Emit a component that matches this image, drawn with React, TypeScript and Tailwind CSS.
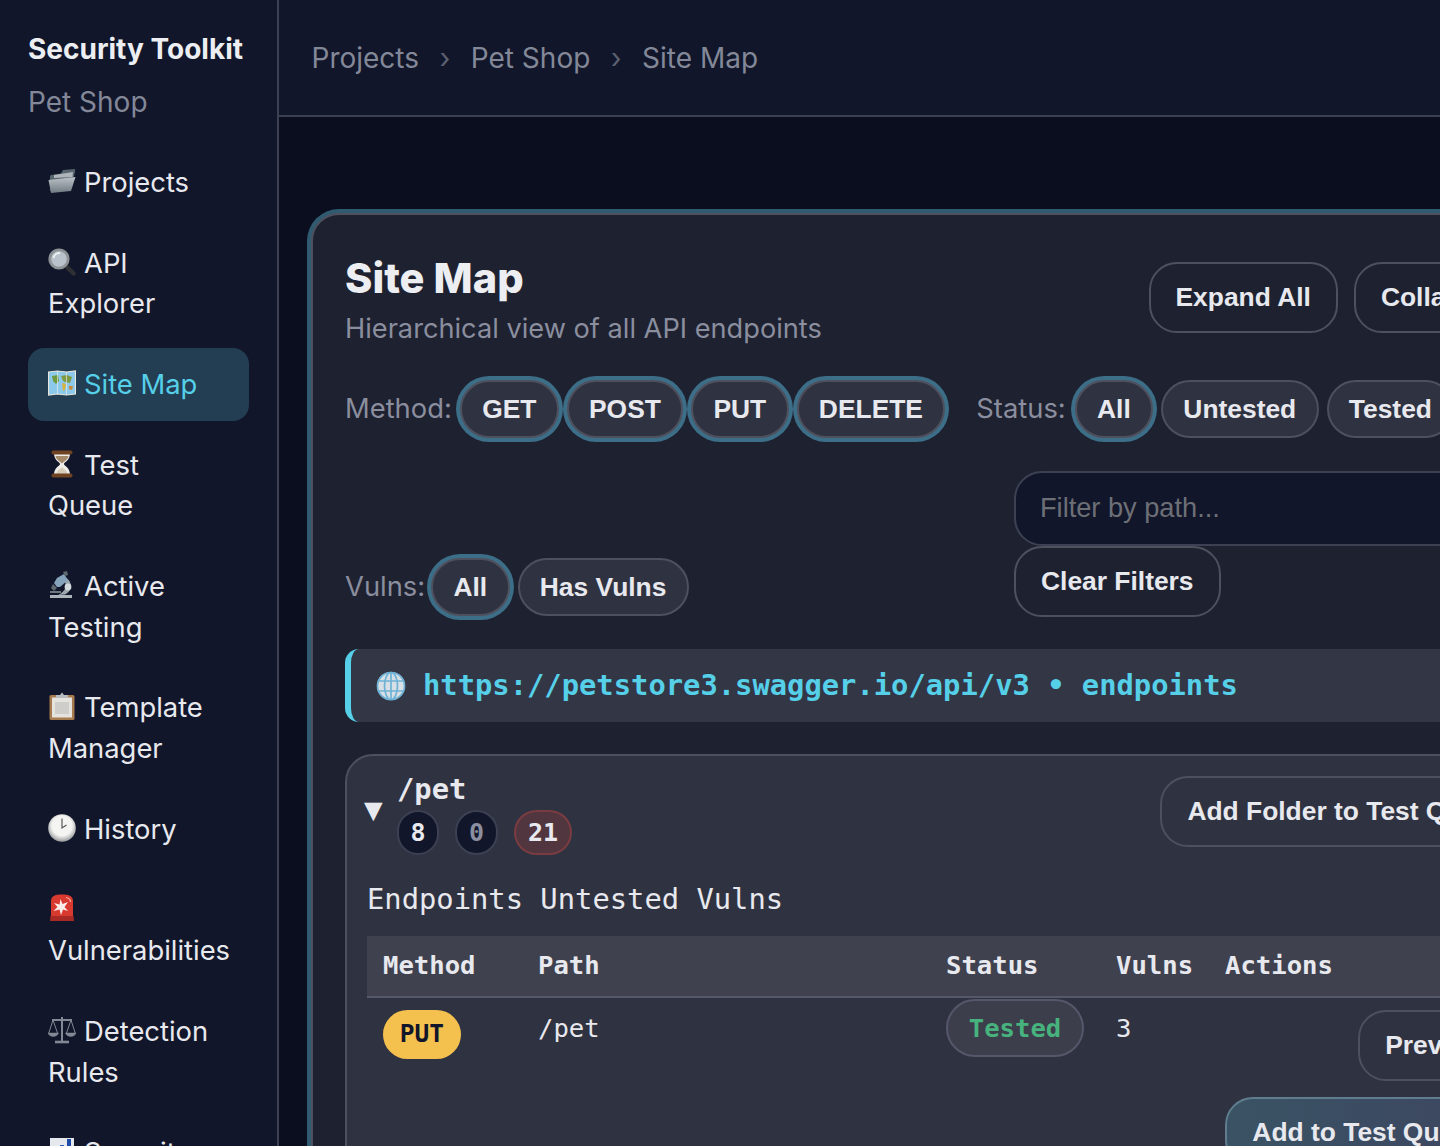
import React from "react";

const Folder = () => (
  <svg viewBox="0 0 28 28" className="inline-block w-[28px] h-[28px] align-[-3px] mr-[8px]">
    <defs>
      <linearGradient id="fo" x1="0" y1="0" x2="0" y2="1"><stop offset="0" stopColor="#bcc2c7" /><stop offset="1" stopColor="#6f7a82" /></linearGradient>
    </defs>
    <path d="M2 9 L2 24 L22 24 L27 5 L27 2 L15 3 L13 6.5 L3 8 Z" fill="#56646e" />
    <path d="M6 8 L25 5 L24.5 10 L6 11 Z" fill="#aeb4b9" />
    <path d="M0.5 13 L27.5 10 L23 24 L3 26 Z" fill="url(#fo)" />
  </svg>
);
const Magnifier = () => (
  <svg viewBox="0 0 28 28" className="inline-block w-[28px] h-[28px] align-[-3px] mr-[8px]">
    <path d="M17 17 L25.5 25.5" stroke="#2e3033" strokeWidth="4.5" strokeLinecap="round" />
    <circle cx="11" cy="11" r="9.2" fill="#b9c2ca" stroke="#8d9296" strokeWidth="2.8" />
    <path d="M5.5 10 A6 6 0 0 1 12 5" stroke="#eef1f3" strokeWidth="2" fill="none" />
  </svg>
);
const MapIcon = () => (
  <svg viewBox="0 0 28 28" className="inline-block w-[28px] h-[28px] align-[-3px] mr-[8px]">
    <path d="M0.5 3 L9.5 2 L18.5 3 L27.5 2 L27.5 25 L18.5 26 L9.5 25 L0.5 26 Z" fill="#8cc9ea" stroke="#e8e6dc" strokeWidth="1.2" />
    <path d="M4 7 L10 6 L11 12 L8 15 L5 12 Z" fill="#6d9a3e" />
    <path d="M13 7 L19 6 L24 8 L22 14 L17 13 L15 12 Z" fill="#7f9a44" />
    <path d="M14 14 L18 15 L17 21 L15 22 Z" fill="#d6b23f" />
    <path d="M21 17 L25 17 L24 21 L21 20 Z" fill="#c98a3a" />
    <path d="M9.5 2 V25 M18.5 3 V26" stroke="#f0efe6" strokeWidth="0.8" opacity="0.8" />
  </svg>
);
const Hourglass = () => (
  <svg viewBox="0 0 28 28" className="inline-block w-[28px] h-[28px] align-[-3px] mr-[8px]">
    <path d="M6 3 C6 11 12 12 12 14 C12 16 6 17 6 25 H22 C22 17 16 16 16 14 C16 12 22 11 22 3 Z" fill="#efeee8" />
    <path d="M7.5 6 H20.5 C20 10 15 12 14 13.5 C13 12 8 10 7.5 6 Z" fill="#a58a6a" />
    <path d="M8.5 24 C9 19.5 13 19 14 17 C15 19 19 19.5 19.5 24 Z" fill="#d8cdbb" />
    <rect x="3.5" y="0.5" width="21" height="4" rx="1.8" fill="#6e4322" />
    <rect x="3.5" y="23.5" width="21" height="4" rx="1.8" fill="#6e4322" />
  </svg>
);
const Microscope = () => (
  <svg viewBox="0 0 28 28" className="inline-block w-[28px] h-[28px] align-[-3px] mr-[8px]">
    <path d="M2 24 H24 V27 H2 Z" fill="#a9b4bb" />
    <path d="M16 6 C25 9 25 20 17 23.5 L10 24 C17 21 21 14 15 9 Z" fill="#9aa7ae" />
    <circle cx="20" cy="16" r="3.4" fill="#d4dbdf" />
    <path d="M9 7 L16 3 L20 9 L12 16 L9 16 L6 12 Z" fill="#85a4bc" />
    <path d="M15 1 L19 0 L20 4 L17 5 Z" fill="#5e6a70" />
    <path d="M5 13 L9 17 L6 20 L3 17 Z" fill="#5f6a70" />
    <path d="M2 20 H13 V22 H2 Z" fill="#6d787e" />
  </svg>
);
const Clipboard = () => (
  <svg viewBox="0 0 28 28" className="inline-block w-[28px] h-[28px] align-[-3px] mr-[8px]">
    <rect x="1.5" y="3" width="25" height="25" rx="1.6" fill="#a77b4e" />
    <rect x="4" y="5.5" width="20" height="20" fill="#e5e3de" />
    <rect x="7" y="10" width="14" height="12" fill="#cfcdc9" />
    <path d="M8 6 V3 H12 L14 0.5 L16 3 H20 V6 Z" fill="#b8bcc0" />
  </svg>
);
const Clock = () => (
  <svg viewBox="0 0 28 28" className="inline-block w-[28px] h-[28px] align-[-3px] mr-[8px]">
    <defs>
      <radialGradient id="cl" cx="0.5" cy="0.42" r="0.6"><stop offset="0.6" stopColor="#f4f4f2" /><stop offset="1" stopColor="#8e9092" /></radialGradient>
    </defs>
    <circle cx="14" cy="14" r="13.8" fill="url(#cl)" />
    <path d="M14 4.5 V14 L18.5 11" stroke="#55585c" strokeWidth="1.2" fill="none" />
  </svg>
);
const Siren = () => (
  <svg viewBox="0 0 28 28" className="inline-block w-[28px] h-[28px] align-[-3px] mr-[8px]">
    <path d="M3 23 V7 C3 1.5 8 0.5 14 0.5 C20 0.5 25 1.5 25 7 V23 Z" fill="#d93a2f" />
    <path d="M12.5 5 L14.5 10 L20 8 L16.5 13 L20 17 L15 15.5 L13 21 L11.5 15.5 L5.5 17 L9.5 13 L6 9 L11.5 10.5 Z" fill="#fbeeea" />
    <path d="M18 3.5 C21 4 22.5 6 22.5 8" stroke="#f7b0a6" strokeWidth="1.2" fill="none" />
    <path d="M2.5 22 H25.5 L26 27 H2 Z" fill="#a92a25" />
  </svg>
);
const Scale = () => (
  <svg viewBox="0 0 28 28" className="inline-block w-[28px] h-[28px] align-[-3px] mr-[8px]" fill="none" stroke="#838894">
    <path d="M14 1 V25 M4 4 H24" strokeWidth="2" />
    <path d="M7 26 H21" strokeWidth="2.6" />
    <path d="M5 4 L0.8 17 M5 4 L9.5 17 M23 4 L18.5 17 M23 4 L27.2 17" strokeWidth="1" />
    <path d="M0 17 H10.5 C9.5 21.5 1 21.5 0 17 Z M17.5 17 H28 C27 21.5 18.5 21.5 17.5 17 Z" fill="#838894" strokeWidth="0.5" />
  </svg>
);
const Chart = () => (
  <svg viewBox="0 0 28 28" className="inline-block w-[28px] h-[28px] align-[-3px] mr-[8px]">
    <rect x="2" y="1" width="24" height="26" fill="#e5e8ec" />
    <rect x="6" y="14" width="4" height="13" fill="#3f7ed0" />
    <rect x="12" y="8" width="4" height="19" fill="#2f5fb6" />
    <rect x="19" y="2" width="4" height="25" fill="#1d4aa8" />
  </svg>
);
const Globe = () => (
  <svg viewBox="0 0 30 30" className="w-[30px] h-[30px] shrink-0">
    <circle cx="15" cy="15" r="14" fill="#d7e0e4" />
    <g fill="none" stroke="#6fb2d6" strokeWidth="1.7">
      <circle cx="15" cy="15" r="13.5" />
      <ellipse cx="15" cy="15" rx="6.5" ry="13.5" />
      <path d="M15 1.5 V28.5 M2 10 H28 M2 20 H28" />
    </g>
  </svg>
);

type NavItem = { icon: React.ReactNode; first: string; second?: string; active?: boolean };
const nav: NavItem[] = [
  { icon: <Folder />, first: "Projects" },
  { icon: <Magnifier />, first: "API", second: "Explorer" },
  { icon: <MapIcon />, first: "Site Map", active: true },
  { icon: <Hourglass />, first: "Test", second: "Queue" },
  { icon: <Microscope />, first: "Active", second: "Testing" },
  { icon: <Clipboard />, first: "Template", second: "Manager" },
  { icon: <Clock />, first: "History" },
  { icon: <Siren />, first: "", second: "Vulnerabilities" },
  { icon: <Scale />, first: "Detection", second: "Rules" },
  { icon: <Chart />, first: "Security", second: "Reports" },
];

const Pill = ({ label, ring }: { label: string; ring?: boolean }) => (
  <button
    className={`h-[58px] px-[20.3px] rounded-full border-2 border-[#4e505e] bg-[#2f3240] text-[#e8e9ee] text-[26.4px] font-bold leading-none font-['Liberation_Sans',sans-serif] ${
      ring ? "shadow-[0_0_0_4px_#3d6e88]" : ""
    }`}
  >
    {label}
  </button>
);

const GhostButton = ({ label, className = "" }: { label: string; className?: string }) => (
  <button
    className={`h-[71px] px-[25px] rounded-[28px] border-2 border-[#4e505e] text-[#e8e9ee] text-[26.4px] font-bold leading-none whitespace-nowrap shrink-0 font-['Liberation_Sans',sans-serif] ${className}`}
  >
    {label}
  </button>
);

const Count = ({ label, className }: { label: string; className: string }) => (
  <span className={`h-[45px] rounded-full border-2 flex items-center justify-center text-[25px] font-bold ${className}`}>{label}</span>
);

export default function App() {
  return (
    <div className="flex w-[1440px] h-[1146px] overflow-hidden bg-[#0b0e1f] font-['Inter',sans-serif] text-[#e8e9ee]">
      <aside className="w-[279px] shrink-0 h-[1146px] overflow-hidden bg-[#11162a] border-r-2 border-[#3d4052] px-[28px]">
        <div className="pt-[28.5px]">
          <div className="text-[28px] leading-[40px] font-bold text-[#eceef2]">Security Toolkit</div>
          <div className="mt-[13.5px] text-[28px] leading-[40px] text-[#838898]">Pet Shop</div>
        </div>
        <nav className="mt-[24px] flex flex-col gap-[7.8px] w-[221px]">
          {nav.map((n, i) => (
            <div
              key={i}
              className={`px-[20px] pt-[16px] pb-[16px] rounded-[16px] text-[27.36px] leading-[40.8px] ${
                n.active ? "bg-[#233d52] text-[#56cfe8]" : "text-[#e8e9ee]"
              }`}
            >
              {n.icon}
              {n.first}
              {n.second && (
                <>
                  <br />
                  {n.second}
                </>
              )}
            </div>
          ))}
        </nav>
      </aside>

      <div className="flex-1 min-w-0 flex flex-col">
        <header className="h-[117px] shrink-0 bg-[#11162a] border-b-2 border-[#3d4052] flex items-center pl-[32.5px] pt-[1px] text-[28px] text-[#838898]">
          <span>Projects</span>
          <span className="mx-[20.5px] text-[#5c6070]">›</span>
          <span>Pet Shop</span>
          <span className="mx-[20.5px] text-[#5c6070]">›</span>
          <span>Site Map</span>
        </header>

        <main className="flex-1 min-h-0 pt-[96px] pl-[32px] bg-[#0b0e1f]">
          <section className="w-[1281px] rounded-[28px] border-2 border-[#4e505e] shadow-[0_0_0_4px_#2f5a70] bg-[#1e2130] pt-[32px] pl-[32px] pr-[32px] pb-[40px]">
            <div className="flex items-start justify-between">
              <div>
                <h1 className="text-[41.5px] leading-[65px] font-extrabold text-[#eceef2] mt-[-1px]">Site Map</h1>
                <p className="text-[27.2px] leading-[36px] text-[#8a8e9e]">Hierarchical view of all API endpoints</p>
              </div>
              <div className="flex gap-[16px] mt-[15px]">
                <GhostButton label="Expand All" />
                <GhostButton label="Collapse All" />
              </div>
            </div>

            <div className="mt-[33px] flex items-center">
              <span className="text-[27.36px] text-[#8a8e9e] mr-[8px]">Method:</span>
              <div className="flex gap-[8px]">
                <Pill label="GET" ring />
                <Pill label="POST" ring />
                <Pill label="PUT" ring />
                <Pill label="DELETE" ring />
              </div>
              <span className="text-[27.36px] text-[#8a8e9e] ml-[31px] mr-[9px]">Status:</span>
              <div className="flex gap-[8px]">
                <Pill label="All" ring />
                <Pill label="Untested" />
                <Pill label="Tested" />
              </div>
            </div>

            <div className="mt-[33px] flex items-end justify-between">
              <div className="flex items-center pb-[1px]">
                <span className="text-[27.36px] text-[#8a8e9e] mr-[6px]">Vulns:</span>
                <div className="flex gap-[8px]">
                  <Pill label="All" ring />
                  <Pill label="Has Vulns" />
                </div>
              </div>
              <div className="flex flex-col items-start w-[544px]">
                <div className="w-full h-[75px] rounded-[28px] border-2 border-[#3d4052] bg-[#11162a] flex items-center pl-[24px] text-[27.2px] text-[#6d6f76] font-['Liberation_Sans',sans-serif]">
                  Filter by path...
                </div>
                <GhostButton label="Clear Filters" />
              </div>
            </div>

            <div className="mt-[32px] h-[73px] rounded-[14px] border-l-[6px] border-[#56cfe8] bg-[#333644] flex items-center pl-[25px] gap-[17px]">
              <Globe />
              <span className="font-['DejaVu_Sans_Mono',monospace] font-bold text-[28.8px] text-[#56cfe8] whitespace-nowrap">
                https://petstore3.swagger.io/api/v3 • endpoints
              </span>
            </div>

            <div className="mt-[32px] rounded-[28px] border-2 border-[#4e505e] bg-[#2f3240] pl-[20px] pr-[21px] pt-[18px] pb-[40px] font-['DejaVu_Sans_Mono',monospace]">
              <div className="flex items-start">
                <span className="mt-[20px] ml-[-3px] text-[#e8e9ee] w-[33px] text-[31px] leading-none">▼</span>
                <div>
                  <div className="text-[28.8px] leading-[30px] font-bold">/pet</div>
                  <div className="flex gap-[16px] mt-[6px]">
                    <Count label="8" className="w-[42px] bg-[#11162a] border-[#3d4052] text-[#e8e9ee]" />
                    <Count label="0" className="w-[43px] bg-[#11162a] border-[#3d4052] text-[#8a8e9e]" />
                    <Count label="21" className="w-[58px] bg-[#513640] border-[#7a3c40] text-[#e8e9ee]" />
                  </div>
                </div>
                <div className="ml-auto mt-[2px]">
                  <GhostButton label="Add Folder to Test Queue" />
                </div>
              </div>

              <div className="mt-[24px] text-[28.8px] leading-[40px]">Endpoints Untested Vulns</div>

              <div className="mt-[17px]">
                <div className="grid grid-cols-[155px_408px_170px_109px_1fr] h-[62px] items-center bg-[#3f414f] border-b-2 border-[#55576a] text-[25.6px] font-bold text-[#e8e9ee] pl-[16px] leading-none">
                  <span>Method</span>
                  <span>Path</span>
                  <span>Status</span>
                  <span>Vulns</span>
                  <span>Actions</span>
                </div>
                <div className="grid grid-cols-[155px_408px_170px_109px_1fr] pl-[16px] text-[25.6px] text-[#e8e9ee]">
                  <div className="pt-[12px]">
                    <span className="inline-flex h-[49px] w-[78px] items-center justify-center rounded-full bg-[#f4c04e] text-[#11162a] text-[24.5px] font-bold">PUT</span>
                  </div>
                  <div className="pt-[14px] leading-[32px]">/pet</div>
                  <div className="pt-[1px]">
                    <span className="inline-flex h-[58px] w-[138px] items-center justify-center rounded-full border-2 border-[#55576a] bg-[#3c3e4c] text-[#47b27d] font-bold">Tested</span>
                  </div>
                  <div className="pt-[14px] leading-[32px]">3</div>
                  <div className="pt-[12px] flex flex-col items-end gap-[16px] w-[287px]">
                    <GhostButton label="Preview" />
                    <GhostButton label="Add to Test Queue" className="bg-[linear-gradient(90deg,#3a5364,#3d4560)] border-[#5f7d8e]" />
                  </div>
                </div>
              </div>
            </div>
          </section>
        </main>
      </div>
    </div>
  );
}
